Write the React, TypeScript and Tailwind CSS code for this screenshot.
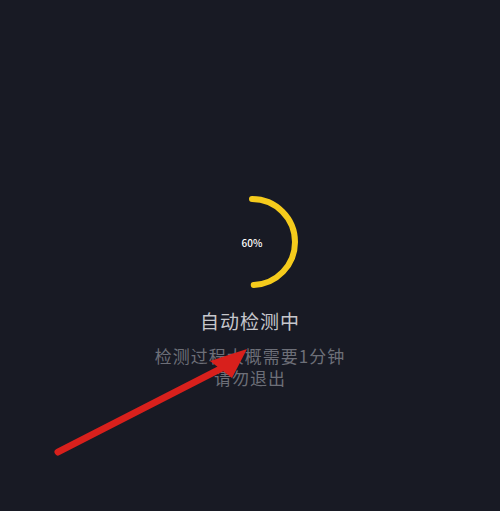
export default function App() {
  const r = 43;
  const c = 2 * Math.PI * r;

  return (
    <div
      className="relative flex h-[511px] w-[500px] flex-col items-center overflow-hidden bg-[#181a24]"
      style={{ fontFamily: '"Noto Sans CJK SC", "Noto Sans", sans-serif' }}
    >
      {/* progress ring */}
      <div className="relative mt-[194px] ml-[4px] h-[96px] w-[96px]">
        <svg width="96" height="96" viewBox="0 0 96 96" className="-rotate-90">
          <circle
            cx="48"
            cy="48"
            r={r}
            fill="none"
            stroke="#f5cb1c"
            strokeWidth="6"
            strokeLinecap="round"
            strokeDasharray={`${c / 2 - 2} ${c}`}
          />
        </svg>
        <div className="absolute inset-0 flex items-center justify-center text-[10px] font-medium text-white">
          60%
        </div>
      </div>

      <div className="mt-[17px] text-[19px] leading-[28px] tracking-[1px] text-[#c6c7cc]">
        自动检测中
      </div>
      <div className="mt-[10px] text-center text-[17px] leading-[22px] tracking-[1px] text-[#6d6f78]">
        <div>检测过程大概需要1分钟</div>
        <div>请勿退出</div>
      </div>

      {/* red annotation arrow */}
      <svg
        className="pointer-events-none absolute inset-0"
        width="500"
        height="511"
        viewBox="0 0 500 511"
      >
        <line
          x1="58"
          y1="452"
          x2="228"
          y2="365"
          stroke="#d8201c"
          strokeWidth="7"
          strokeLinecap="round"
        />
        <polygon points="247,349 210,361 232,378" fill="#d8201c" />
      </svg>
    </div>
  );
}
